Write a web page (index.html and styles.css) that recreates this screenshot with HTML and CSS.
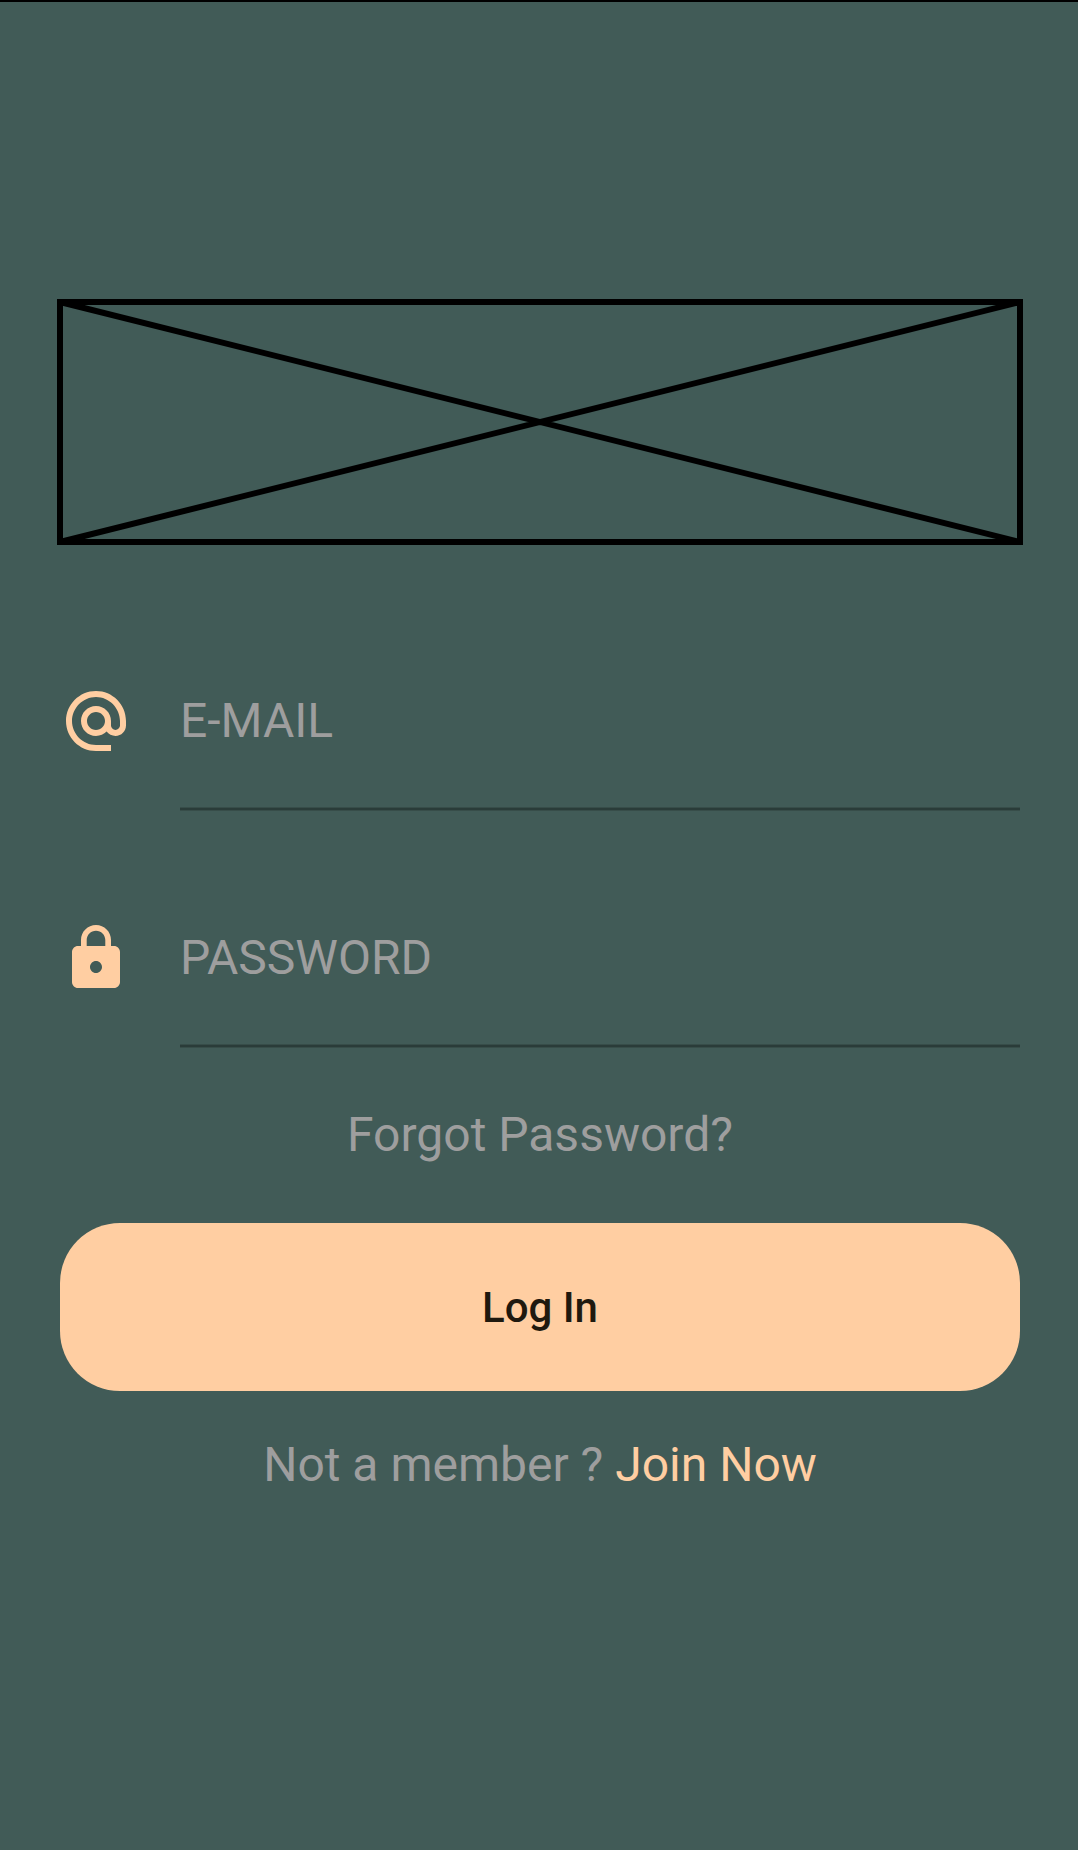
FILE: index.html
```html
<!DOCTYPE html>
<html lang="en">
<head>
<meta charset="utf-8">
<title>Log In</title>
<link rel="stylesheet" href="styles.css">
</head>
<body>
<main class="login">
  <svg class="placeholder" viewBox="0 0 966 246" fill="none" stroke="#000" stroke-width="6">
    <path d="M3 3H963V243H3ZM3 3L963 243M963 3L3 243"/>
  </svg>
  <div class="field">
    <svg class="icon" viewBox="0 0 24 24"><path d="M12 2C6.48 2 2 6.48 2 12s4.48 10 10 10h5v-2h-5c-4.34 0-8-3.66-8-8s3.66-8 8-8 8 3.66 8 8v1.43c0 .79-.71 1.57-1.5 1.57s-1.5-.78-1.5-1.57V12c0-2.76-2.24-5-5-5s-5 2.24-5 5 2.24 5 5 5c1.38 0 2.64-.56 3.54-1.47.65.89 1.77 1.47 2.96 1.47 1.97 0 3.5-1.6 3.5-3.57V12c0-5.52-4.48-10-10-10zm0 13c-1.66 0-3-1.34-3-3s1.34-3 3-3 3 1.34 3 3-1.34 3-3 3z"/></svg>
    <div class="input"><span class="hint">E-MAIL</span></div>
  </div>
  <div class="field">
    <svg class="icon" viewBox="0 0 24 24"><path d="M18 8h-1V6c0-2.76-2.24-5-5-5S7 3.24 7 6v2H6c-1.1 0-2 .9-2 2v10c0 1.1.9 2 2 2h12c1.1 0 2-.9 2-2V10c0-1.1-.9-2-2-2zm-6 9c-1.1 0-2-.9-2-2s.9-2 2-2 2 .9 2 2-.9 2-2 2zm3.1-9H8.9V6c0-1.71 1.39-3.1 3.1-3.1s3.1 1.39 3.1 3.1v2z"/></svg>
    <div class="input"><span class="hint">PASSWORD</span></div>
  </div>
  <div class="forgot">Forgot Password?</div>
  <button class="submit">Log In</button>
  <div class="signup">Not a member ? <span class="join">Join Now</span></div>
</main>
</body>
</html>
```
FILE: styles.css
```css
body {
  margin: 0;
  background: #415b57;
  font-family: Roboto, sans-serif;
}
.login {
  box-sizing: border-box;
  height: 1850px;
  padding: 297px 58px 0 60px;
  border-top: 2px solid #000;
  display: flex;
  flex-direction: column;
  font-size: 48px;
  line-height: 56px;
  color: #9e9e9e;
}
.placeholder {
  width: 966px;
  height: 246px;
  margin: 0 -3px 140px;
  flex: none;
}
.field {
  display: flex;
  gap: 48px;
  height: 126px;
  margin-bottom: 111px;
}
.icon {
  width: 72px;
  height: 72px;
  fill: #ffcea2;
}
.input {
  flex: 1;
  box-sizing: border-box;
  padding-top: 8px;
  background: linear-gradient(#374d49 0 1px, #2a3c39 1px 3px, #374d49 3px) bottom / 100% 4px no-repeat;
}
.field + .field {
  margin-bottom: 59px;
}
.forgot {
  text-align: center;
}
.submit {
  box-sizing: border-box;
  height: 168px;
  margin: 60px 0 46px;
  padding: 2px 0 0;
  border: 0;
  border-radius: 60px;
  background: #ffcea2;
  color: #1f190f;
  font: 500 42px/50px Roboto, sans-serif;
}
.signup {
  text-align: center;
}
.join {
  color: #ffcea2;
}
```
